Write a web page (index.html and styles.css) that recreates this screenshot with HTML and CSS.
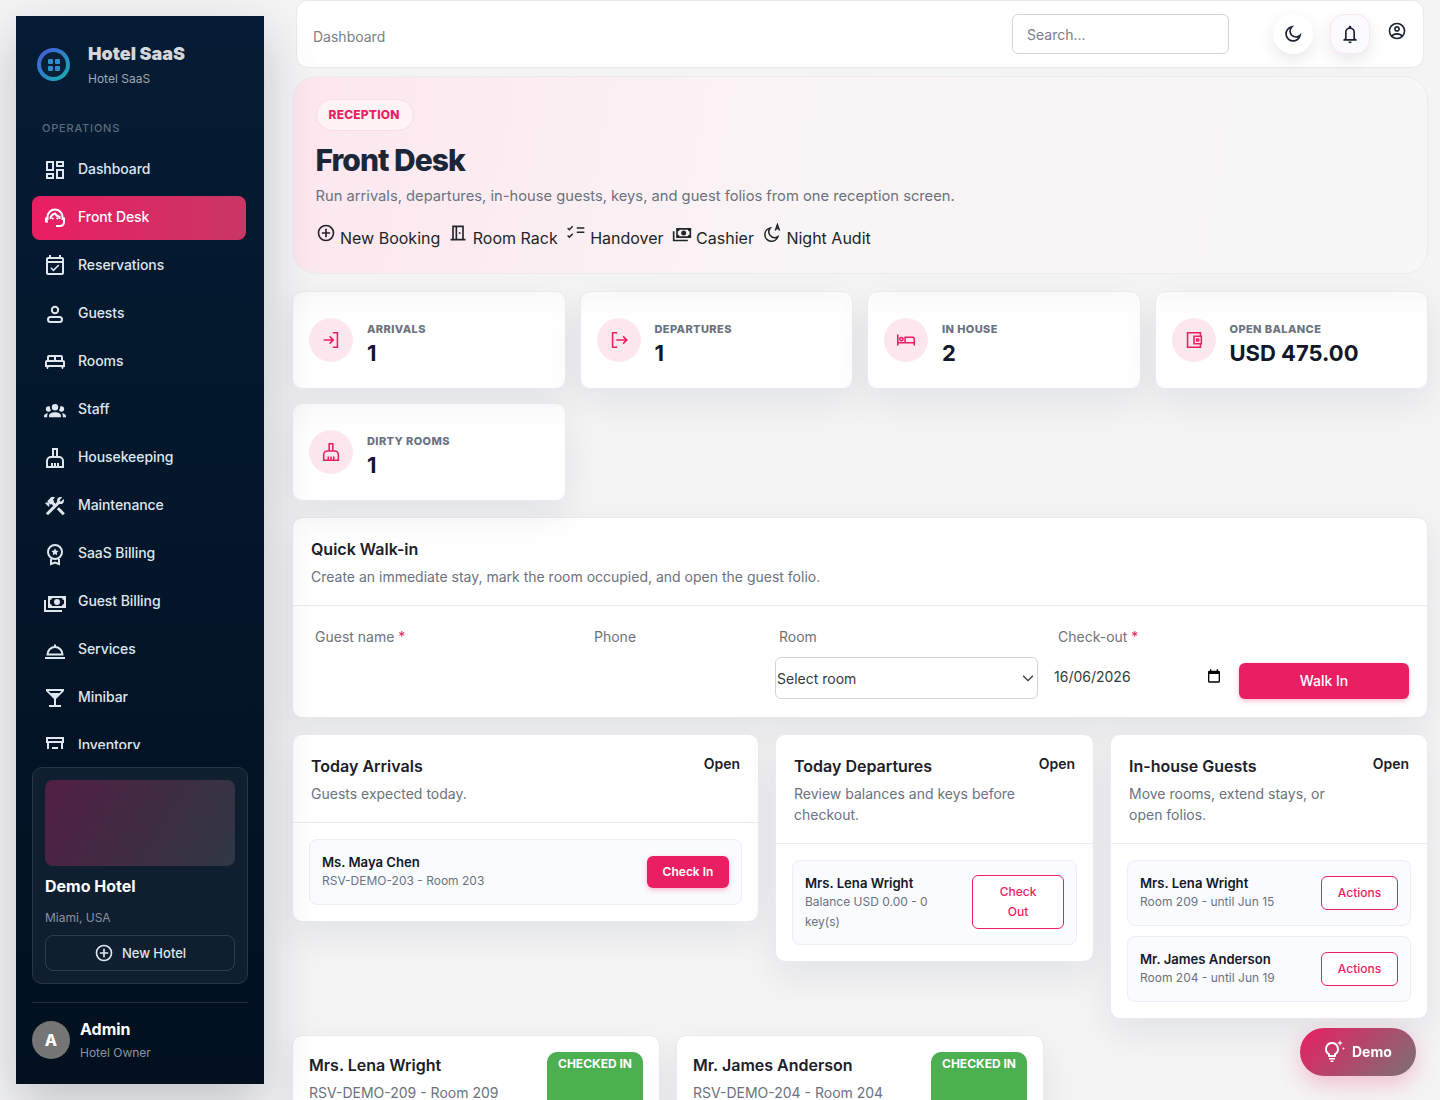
FILE: index.html
```html
<!DOCTYPE html>
<html lang="en">
  <head>
    <meta charset="UTF-8" />
    <title>Front Desk - Hotel SaaS</title>
    <link rel="stylesheet" href="styles.css">
  </head>
  <body>
    <aside class="sidebar">
      <div class="brand">
        <div class="brand-logo">
          <span class="brand-logo-inner">
            <svg viewBox="0 0 12 12" width="12" height="12"><rect x="0" y="0" width="5" height="5" rx="1"/><rect x="7" y="0" width="5" height="5" rx="1"/><rect x="0" y="7" width="5" height="5" rx="1"/><rect x="7" y="7" width="5" height="5" rx="1"/></svg>
          </span>
        </div>
        <div>
          <div class="brand-name">Hotel SaaS</div>
          <div class="brand-sub">Hotel SaaS</div>
        </div>
      </div>
      <div class="nav-title">OPERATIONS</div>
      <nav class="nav">
        <a class="nav-item"><svg class="ic" viewBox="0 0 24 24"><path d="M19,5V7H15V5H19M9,5V11H5V5H9M19,13V19H15V13H19M9,17V19H5V17H9M21,3H13V9H21V3M11,3H3V13H11V3M21,11H13V21H21V11M11,15H3V21H11V15Z"/></svg>Dashboard</a>
        <a class="nav-item active"><svg class="ic line" viewBox="0 0 24 24"><path d="M4.500 14V11a7.500 7.500 0 0 1 15 0v3"/><path d="M7.500 13c0-2.500 1.500-4.500 4.500-5.500 1 2 2.500 3 4.500 3.200V13"/><path d="M3 11.500v4h2M21 11.500V16c0 2.500-2 4-4.500 4H13"/><path class="solid" d="M9.800 11.500a1 1 0 1 1 0 2 1 1 0 0 1 0-2zM14.200 11.500a1 1 0 1 1 0 2 1 1 0 0 1 0-2z"/></svg>Front Desk</a>
        <a class="nav-item"><svg class="ic" viewBox="0 0 24 24"><path d="M19 3H18V1H16V3H8V1H6V3H5C3.89 3 3 3.9 3 5V19C3 20.1 3.89 21 5 21H19C20.1 21 21 20.1 21 19V5C21 3.9 20.1 3 19 3M19 19H5V9H19V19M19 7H5V5H19V7M10.41 17.46L16.34 11.53L15.28 10.47L10.41 15.34L8.31 13.24L7.25 14.3L10.41 17.46Z"/></svg>Reservations</a>
        <a class="nav-item"><svg class="ic line" viewBox="0 0 24 24"><circle cx="12" cy="8" r="3.2"/><rect x="5" y="15" width="14" height="5" rx="2.5"/></svg>Guests</a>
        <a class="nav-item"><svg class="ic" viewBox="0 0 24 24"><path d="M20 10V7C20 5.9 19.1 5 18 5H6C4.9 5 4 5.9 4 7V10C2.9 10 2 10.9 2 12V17H3.33L4 19H5L5.67 17H18.33L19 19H20L20.67 17H22V12C22 10.9 21.1 10 20 10M11 10H6V7H11V10M18 10H13V7H18V10M20 15H4V12H20V15Z"/></svg>Rooms</a>
        <a class="nav-item"><svg class="ic staff-ic" viewBox="0 0 24 24"><path d="M12,5.5A3.5,3.5 0 0,1 15.5,9A3.5,3.5 0 0,1 12,12.5A3.5,3.5 0 0,1 8.5,9A3.5,3.5 0 0,1 12,5.5M5,8C5.56,8 6.08,8.15 6.53,8.42C6.38,9.85 6.8,11.27 7.66,12.38C7.16,13.34 6.16,14 5,14A3,3 0 0,1 2,11A3,3 0 0,1 5,8M19,8A3,3 0 0,1 22,11A3,3 0 0,1 19,14C17.84,14 16.84,13.34 16.34,12.38C17.2,11.27 17.62,9.85 17.47,8.42C17.92,8.15 18.44,8 19,8M5.5,18.25C5.5,16.18 8.41,14.5 12,14.5C15.59,14.5 18.5,16.18 18.5,18.25V20H5.5V18.25M0,20V18.5C0,17.11 1.89,15.94 4.45,15.6C3.86,16.28 3.5,17.22 3.5,18.25V20H0M24,20H20.5V18.25C20.5,17.22 20.14,16.28 19.55,15.6C22.11,15.94 24,17.11 24,18.5V20Z"/></svg>Staff</a>
        <a class="nav-item"><svg class="ic line" viewBox="0 0 24 24"><path d="M10 3h4v8h-4zM4 21v-6a4 4 0 0 1 4-4h8a4 4 0 0 1 4 4v6zM9 17v4M12 17v4M15 17v4"/></svg>Housekeeping</a>
        <a class="nav-item"><svg class="ic" viewBox="0 0 24 24"><path d="M13.78 15.3L19.78 21.3L21.89 19.14L15.89 13.14L13.78 15.3M17.5 10.1C17.11 10.1 16.69 10.05 16.36 9.91L4.97 21.25L2.86 19.14L10.27 11.74L8.5 9.96L7.78 10.66L6.33 9.25V12.11L5.63 12.81L2.11 9.25L2.81 8.55H5.62L4.22 7.14L7.78 3.58C8.95 2.41 10.83 2.41 12 3.58L9.89 5.74L11.3 7.14L10.59 7.85L12.38 9.63L14.2 7.75C14.06 7.42 14 7 14 6.63C14 4.66 15.56 3.11 17.5 3.11C18.09 3.11 18.61 3.25 19.08 3.53L16.41 6.2L17.91 7.7L20.58 5.03C20.86 5.5 21 6 21 6.63C21 8.55 19.45 10.1 17.5 10.1Z"/></svg>Maintenance</a>
        <a class="nav-item"><svg class="ic line" viewBox="0 0 24 24"><circle cx="12" cy="10" r="7"/><path d="M8 17v5l4-1.5 4 1.500v-5"/><path class="solid" d="M12 6.3l1.1 2.3 2.5.3-1.8 1.8.4 2.5-2.2-1.2-2.2 1.2.4-2.5-1.8-1.8 2.5-.3z"/></svg>SaaS Billing</a>
        <a class="nav-item"><svg class="ic" viewBox="0 0 24 24"><path d="M5,6H23V18H5V6M14,9A3,3 0 0,1 17,12A3,3 0 0,1 14,15A3,3 0 0,1 11,12A3,3 0 0,1 14,9M9,8A2,2 0 0,1 7,10V14A2,2 0 0,1 9,16H19A2,2 0 0,1 21,14V10A2,2 0 0,1 19,8H9M1,10H3V20H19V22H1V10Z"/></svg>Guest Billing</a>
        <a class="nav-item"><svg class="ic line" viewBox="0 0 24 24"><path d="M4.500 16.500a7.500 7.500 0 0 1 15 0zM2 20h20M12 9V6.500"/></svg>Services</a>
        <a class="nav-item"><svg class="ic" viewBox="0 0 24 24"><path d="M7.5,7L5.5,5H18.5L16.5,7M11,13V19H6V21H18V19H13V13L21,5V3H3V5L11,13Z"/></svg>Minibar</a>
        <a class="nav-item"><svg class="ic line" viewBox="0 0 24 24"><path d="M4 4h16v4H4zM5 8v14M19 8v14M9 14h6"/></svg>Inventory</a>
      </nav>
      <div class="hotel-card">
        <div class="hotel-img"></div>
        <div class="hotel-name">Demo Hotel</div>
        <div class="hotel-loc">Miami, USA</div>
        <button class="hotel-btn"><svg class="ic" viewBox="0 0 24 24"><path d="M12,20C7.59,20 4,16.41 4,12C4,7.59 7.59,4 12,4C16.41,4 20,7.59 20,12C20,16.41 16.41,20 12,20M12,2A10,10 0 0,0 2,12A10,10 0 0,0 12,22A10,10 0 0,0 22,12A10,10 0 0,0 12,2M13,7H11V11H7V13H11V17H13V13H17V11H13V7Z"/></svg>New Hotel</button>
      </div>
      <div class="user-row">
        <div class="avatar">A</div>
        <div>
          <div class="user-name">Admin</div>
          <div class="user-role">Hotel Owner</div>
        </div>
      </div>
    </aside>

    <main class="main">
      <header class="topbar">
        <div class="crumb">Dashboard</div>
        <div class="search">Search...</div>
        <button class="round-btn"><svg class="ic line" viewBox="0 0 24 24"><path d="M20.500 13.500A8.500 8.500 0 1 1 10.500 3.500a7 7 0 0 0 10 10z"/></svg></button>
        <button class="round-btn bell"><svg class="ic" viewBox="0 0 24 24"><path d="M12 2a1.500 1.500 0 0 1 1.500 1.500v.6A6 6 0 0 1 18 10v7l2 1.500V20H4v-1.500L6 17v-7a6 6 0 0 1 4.500-5.900v-.6A1.500 1.500 0 0 1 12 2zm0 4a4 4 0 0 0-4 4v8h8v-8a4 4 0 0 0-4-4zM10 21h4a2 2 0 0 1-4 0z"/></svg></button>
        <svg class="ic user-ic" viewBox="0 0 24 24"><path d="M12,2A10,10 0 0,0 2,12A10,10 0 0,0 12,22A10,10 0 0,0 22,12A10,10 0 0,0 12,2M7.07,18.28C7.5,17.38 10.12,16.5 12,16.5C13.88,16.500 16.500,17.38 16.930,18.280C15.570,19.360 13.860,20 12,20C10.140,20 8.430,19.360 7.070,18.280M18.360,16.830C16.930,15.090 13.460,14.500 12,14.500C10.540,14.500 7.070,15.090 5.640,16.830C4.620,15.500 4,13.820 4,12C4,7.590 7.590,4 12,4C16.410,4 20,7.590 20,12C20,13.820 19.380,15.500 18.360,16.830M12,6C10.060,6 8.500,7.560 8.500,9.500C8.500,11.440 10.060,13 12,13C13.940,13 15.500,11.440 15.500,9.500C15.500,7.560 13.940,6 12,6M12,11A1.500,1.500 0 0,1 10.500,9.500A1.500,1.500 0 0,1 12,8A1.500,1.500 0 0,1 13.500,9.500A1.500,1.500 0 0,1 12,11Z"/></svg>
      </header>

      <section class="hero">
        <span class="pill">RECEPTION</span>
        <h1>Front Desk</h1>
        <p>Run arrivals, departures, in-house guests, keys, and guest folios from one reception screen.</p>
        <div class="hero-links">
          <a><svg class="ic" viewBox="0 0 24 24"><path d="M12,20C7.59,20 4,16.41 4,12C4,7.59 7.59,4 12,4C16.41,4 20,7.59 20,12C20,16.41 16.41,20 12,20M12,2A10,10 0 0,0 2,12A10,10 0 0,0 12,22A10,10 0 0,0 22,12A10,10 0 0,0 12,2M13,7H11V11H7V13H11V17H13V13H17V11H13V7Z"/></svg>New Booking</a>
          <a><svg class="ic" viewBox="0 0 24 24"><path d="M19 19V3H5V19H3V21H21V19H19M17 19H11V5H17V19M9 19H7V5H9V19M13 11H15V13H13V11Z"/></svg>Room Rack</a>
          <a><svg class="ic line thin" viewBox="0 0 24 24"><path d="M2 6l2 2 4-4M2 15l2 2 4-4M13 6h9M13 11h9"/></svg>Handover</a>
          <a><svg class="ic" viewBox="0 0 24 24"><path d="M5,6H23V18H5V6M14,9A3,3 0 0,1 17,12A3,3 0 0,1 14,15A3,3 0 0,1 11,12A3,3 0 0,1 14,9M9,8A2,2 0 0,1 7,10V14A2,2 0 0,1 9,16H19A2,2 0 0,1 21,14V10A2,2 0 0,1 19,8H9M1,10H3V20H19V22H1V10Z"/></svg>Cashier</a>
          <a><svg class="ic line thin" viewBox="0 0 24 24"><path d="M10 6a8 8 0 1 0 9 10.500A7 7 0 0 1 10 6zM16 9l2.500-7 2.500 7M17 6.500h3"/></svg>Night Audit</a>
        </div>
      </section>

      <section class="stats">
        <div class="stat">
          <div class="stat-ic"><svg class="ic line pink" viewBox="0 0 24 24"><path d="M14 4h5v16h-5M4 12h10M10.500 8l4 4-4 4"/></svg></div>
          <div class="stat-text"><div class="stat-label">ARRIVALS</div><div class="stat-val">1</div></div>
        </div>
        <div class="stat">
          <div class="stat-ic"><svg class="ic line pink" viewBox="0 0 24 24"><path d="M10 4H5v16h5M9 12h11M16.500 8l4 4-4 4"/></svg></div>
          <div class="stat-text"><div class="stat-label">DEPARTURES</div><div class="stat-val">1</div></div>
        </div>
        <div class="stat">
          <div class="stat-ic"><svg class="ic line pink" viewBox="0 0 24 24"><path d="M3 6v12M3 15h18v3M21 15v-4a2 2 0 0 0-2-2h-8v6"/><circle cx="7" cy="11" r="1.800"/></svg></div>
          <div class="stat-text"><div class="stat-label">IN HOUSE</div><div class="stat-val">2</div></div>
        </div>
        <div class="stat">
          <div class="stat-ic"><svg class="ic line pink" viewBox="0 0 24 24"><path d="M19 8V4H5v16h14v-4"/><path d="M12 8h8v8h-8z"/><rect x="15" y="11" width="2" height="2"/></svg></div>
          <div class="stat-text"><div class="stat-label">OPEN BALANCE</div><div class="stat-val">USD 475.00</div></div>
        </div>
        <div class="stat">
          <div class="stat-ic"><svg class="ic line pink" viewBox="0 0 24 24"><path d="M10 3h4v8h-4zM4 21v-6a4 4 0 0 1 4-4h8a4 4 0 0 1 4 4v6zM9 17v4M12 17v4M15 17v4"/></svg></div>
          <div class="stat-text"><div class="stat-label">DIRTY ROOMS</div><div class="stat-val">1</div></div>
        </div>
      </section>

      <section class="card walkin">
        <div class="card-head">
          <div class="card-title">Quick Walk-in</div>
          <div class="card-sub">Create an immediate stay, mark the room occupied, and open the guest folio.</div>
        </div>
        <form class="walkin-form">
          <div class="field">
            <label>Guest name <span class="req">*</span></label>
          </div>
          <div class="field">
            <label>Phone</label>
          </div>
          <div class="field">
            <label>Room</label>
            <select class="room-select"><option>Select room</option></select>
          </div>
          <div class="field">
            <label>Check-out <span class="req">*</span></label>
            <div class="date-val">16/06/2026
              <svg viewBox="0 0 24 24" width="16" height="16"><path d="M19 4h-1V2h-2v2H8V2H6v2H5a2 2 0 0 0-2 2v14a2 2 0 0 0 2 2h14a2 2 0 0 0 2-2V6a2 2 0 0 0-2-2zm0 16H5V9h14z"/></svg>
            </div>
          </div>
          <button type="button" class="btn-pink walk-btn">Walk In</button>
        </form>
      </section>

      <section class="board">
        <div class="card">
          <div class="card-head split">
            <div>
              <div class="card-title">Today Arrivals</div>
              <div class="card-sub">Guests expected today.</div>
            </div>
            <a class="open-link">Open</a>
          </div>
          <div class="list">
            <div class="item">
              <div class="item-text">
                <div class="item-name">Ms. Maya Chen</div>
                <div class="item-sub">RSV-DEMO-203 - Room 203</div>
              </div>
              <button class="btn-pink small">Check In</button>
            </div>
          </div>
        </div>

        <div class="card">
          <div class="card-head split">
            <div>
              <div class="card-title">Today Departures</div>
              <div class="card-sub">Review balances and keys before checkout.</div>
            </div>
            <a class="open-link">Open</a>
          </div>
          <div class="list">
            <div class="item tall">
              <div class="item-text">
                <div class="item-name">Mrs. Lena Wright</div>
                <div class="item-sub">Balance USD 0.00 - 0 key(s)</div>
              </div>
              <button class="btn-line checkout">Check Out</button>
            </div>
          </div>
        </div>

        <div class="card">
          <div class="card-head split">
            <div>
              <div class="card-title">In-house Guests</div>
              <div class="card-sub">Move rooms, extend stays, or open folios.</div>
            </div>
            <a class="open-link">Open</a>
          </div>
          <div class="list">
            <div class="item">
              <div class="item-text">
                <div class="item-name">Mrs. Lena Wright</div>
                <div class="item-sub">Room 209 - until Jun 15</div>
              </div>
              <button class="btn-line">Actions</button>
            </div>
            <div class="item">
              <div class="item-text">
                <div class="item-name">Mr. James Anderson</div>
                <div class="item-sub">Room 204 - until Jun 19</div>
              </div>
              <button class="btn-line">Actions</button>
            </div>
          </div>
        </div>
      </section>

      <section class="stays">
        <div class="card stay">
          <div class="stay-text">
            <div class="card-title">Mrs. Lena Wright</div>
            <div class="card-sub">RSV-DEMO-209 - Room 209</div>
          </div>
          <span class="badge">CHECKED IN</span>
        </div>
        <div class="card stay">
          <div class="stay-text">
            <div class="card-title">Mr. James Anderson</div>
            <div class="card-sub">RSV-DEMO-204 - Room 204</div>
          </div>
          <span class="badge">CHECKED IN</span>
        </div>
      </section>
    </main>

    <button class="demo-btn">
      <svg class="ic" viewBox="0 0 24 24"><path d="M10 3a7 7 0 0 0-4 12.700V17a1 1 0 0 0 1 1h6a1 1 0 0 0 1-1v-1.300A7 7 0 0 0 10 3zm0 2a5 5 0 0 1 3 9l-1 .7V16H8v-1.300L7 14a5 5 0 0 1 3-9zM7 19h6v1.500H7zM8.500 21.500h3V23h-3zM18 1l.7 2.300L21 4l-2.300.7L18 7l-.7-2.300L15 4l2.300-.7zM21.500 8l.4 1.100 1.100.4-1.100.4-.4 1.100-.4-1.100-1.100-.4 1.100-.4z"/></svg>
      Demo
    </button>
  </body>
</html>
```

FILE: styles.css
```css
* {
  box-sizing: border-box;
}

html,
body {
  height: 1100px;
  overflow: hidden;
}

body {
  margin: 0;
  display: flex;
  align-items: flex-start;
  background: #f4f4f5;
  color: #212529;
  font-family: Inter, "Liberation Sans", sans-serif;
  font-size: 14px;
}

a {
  color: inherit;
  text-decoration: none;
}

button {
  font-family: inherit;
  cursor: pointer;
}

.ic {
  width: 24px;
  height: 24px;
  fill: currentColor;
  flex-shrink: 0;
}

.ic.line {
  fill: none;
  stroke: currentColor;
  stroke-width: 2;
}

.ic.line.thin {
  stroke-width: 1.8;
}

.ic .solid {
  fill: currentColor;
  stroke: none;
}

/* sidebar */
.sidebar {
  position: relative;
  z-index: 2;
  width: 248px;
  height: 1068px;
  margin: 16px 0 0 16px;
  padding: 0 16px;
  display: flex;
  flex-direction: column;
  flex-shrink: 0;
  color: #dfe6ee;
  background: linear-gradient(180deg, #051c34 0%, #02101f 100%);
  box-shadow: 0 20px 50px rgba(15, 23, 42, 0.22);
}

.brand {
  display: flex;
  align-items: center;
  gap: 18px;
  padding: 26px 0 0 5px;
}

.brand-logo {
  width: 33px;
  height: 33px;
  padding: 4px;
  border-radius: 50%;
  background: linear-gradient(135deg, #4a55e0, #12b5ad);
}

.brand-logo-inner {
  width: 100%;
  height: 100%;
  display: flex;
  align-items: center;
  justify-content: center;
  border-radius: 50%;
  background: #0a2037;
}

.brand-logo-inner svg {
  fill: #2f8ecb;
}

.brand-name {
  color: #d4d6d9;
  font-size: 18px;
  font-weight: 900;
  line-height: 24px;
}

.brand-sub {
  margin-top: 5px;
  color: #a1a8b1;
  font-size: 12px;
  line-height: 16px;
}

.nav-title {
  margin: 34px 0 0 10px;
  color: #5a6b7e;
  font-size: 11px;
  font-weight: 500;
  letter-spacing: 0.8px;
  line-height: 14px;
}

.nav {
  height: 601px;
  margin-top: 13px;
  display: flex;
  flex-direction: column;
  gap: 4px;
  overflow: hidden;
  flex-shrink: 0;
}

.nav-item {
  width: 214px;
  height: 44px;
  padding: 0 0 4px 11px;
  display: flex;
  align-items: center;
  gap: 11px;
  flex-shrink: 0;
  border-radius: 8px;
  font-size: 14px;
  font-weight: 500;
  letter-spacing: -0.08px;
}

.nav-item .ic {
  margin-top: 4px;
}

.nav-item .staff-ic {
  width: 22px;
  height: 22px;
  margin: 4px 1px 0;
}

.nav-item.active {
  color: #fff;
  background: linear-gradient(90deg, #e91e63, #c93766);
}

.hotel-card {
  height: 217px;
  margin-top: 18px;
  padding: 12px;
  flex-shrink: 0;
  background: #101f2f;
  border: 1px solid #293745;
  border-radius: 10px;
}

.hotel-img {
  height: 86px;
  border-radius: 8px;
  background: linear-gradient(120deg, #521f42, #2f3844);
}

.hotel-name {
  margin-top: 9px;
  color: #fff;
  font-size: 16px;
  font-weight: 700;
  line-height: 22px;
}

.hotel-loc {
  margin-top: 13px;
  color: #8a94a0;
  font-size: 12px;
  line-height: 16px;
}

.hotel-btn {
  width: 100%;
  height: 36px;
  margin-top: 9px;
  display: flex;
  align-items: center;
  justify-content: center;
  gap: 8px;
  color: #dfe6ee;
  background: transparent;
  border: 1px solid #2f3d4c;
  border-radius: 8px;
  font-size: 13px;
  font-weight: 500;
}

.hotel-btn .ic {
  width: 20px;
  height: 20px;
}

.user-row {
  margin-top: 18px;
  padding-top: 16px;
  display: flex;
  align-items: center;
  gap: 10px;
  border-top: 1px solid #1c2a39;
}

.avatar {
  width: 38px;
  height: 38px;
  display: flex;
  align-items: center;
  justify-content: center;
  color: #fff;
  background: #757575;
  border-radius: 50%;
  font-size: 16px;
  font-weight: 800;
}

.user-name {
  color: #fff;
  font-size: 16px;
  font-weight: 700;
  line-height: 20px;
}

.user-role {
  margin-top: 6px;
  color: #8a94a0;
  font-size: 12px;
  line-height: 16px;
}

/* main */
.main {
  width: 1136px;
  margin-left: 28px;
  flex-shrink: 0;
}

.topbar {
  height: 68px;
  margin: 0 4px;
  padding: 0 16px;
  display: flex;
  align-items: flex-start;
  background: #fff;
  border: 1px solid #e8e8ee;
  border-radius: 12px;
}

.crumb {
  margin-top: 27px;
  color: #7b7f86;
  font-size: 14px;
  line-height: 18px;
}

.search {
  width: 217px;
  height: 40px;
  margin: 13px 0 0 auto;
  padding-left: 14px;
  display: flex;
  align-items: center;
  color: #7d7d84;
  background: #fff;
  border: 1px solid #d4d4dc;
  border-radius: 6px;
  font-size: 14px;
}

.round-btn {
  width: 40px;
  height: 40px;
  margin: 13px 0 0 44px;
  padding: 0;
  display: flex;
  align-items: center;
  justify-content: center;
  color: #1b2333;
  background: #fff;
  border: 0;
  border-radius: 50%;
  box-shadow: 0 6px 16px rgba(20, 30, 50, 0.1);
}

.round-btn.bell {
  margin-left: 17px;
  background: #fbfbff;
  border: 1px solid #fbe6ec;
  border-radius: 14px;
}

.round-btn .ic {
  width: 20px;
  height: 20px;
}

.user-ic {
  width: 20px;
  height: 20px;
  margin: 20px 0 0 17px;
  color: #1b2333;
}

.hero {
  height: 198px;
  margin-top: 8px;
  padding: 22px 22.5px;
  background: linear-gradient(100deg, #fde7ee 0%, #f9f4f6 45%, #f7f7f8 100%);
  border: 1px solid #ececf0;
  border-radius: 24px;
}

.pill {
  display: inline-block;
  height: 32px;
  padding: 0 13px 0 12px;
  color: #e91e63;
  background: #fff3f6;
  border: 1px solid #fbdbe5;
  border-radius: 16px;
  font-size: 12px;
  font-weight: 800;
  letter-spacing: 0.2px;
  line-height: 29px;
}

.hero h1 {
  margin: 10px 0 0;
  color: #1b2638;
  font-size: 30px;
  font-weight: 800;
  letter-spacing: -1px;
  line-height: 38px;
}

.hero p {
  margin: 6px 0 0;
  color: #6b7280;
  font-size: 14.72px;
  line-height: 22px;
}

.hero-links {
  margin-top: 19px;
  display: flex;
  gap: 8px;
}

.hero-links a {
  display: flex;
  align-items: flex-start;
  gap: 4.5px;
  color: #212529;
  font-size: 16px;
  line-height: 24px;
}

.hero-links .ic {
  width: 20px;
  height: 20px;
  margin-top: -3px;
}

.stats {
  margin-top: 17px;
  display: grid;
  grid-template-columns: repeat(4, 1fr);
  gap: 14px;
}

.stat {
  height: 98px;
  padding: 0 16px;
  display: flex;
  align-items: center;
  gap: 14px;
  background: linear-gradient(180deg, #f9f9fa, #fff 30%);
  border: 1px solid #e9e9ef;
  border-radius: 10px;
  box-shadow: 0 14px 36px rgba(15, 23, 42, 0.08);
}

.stat-ic {
  width: 44px;
  height: 44px;
  display: flex;
  align-items: center;
  justify-content: center;
  background: #fde7ee;
  border-radius: 50%;
}

.ic.pink {
  width: 22px;
  height: 22px;
  color: #e91e63;
  stroke-width: 1.7;
}

.stat-text {
  padding-top: 10px;
}

.stat-label {
  color: #6b7280;
  font-size: 11px;
  font-weight: 800;
  letter-spacing: 0.4px;
  line-height: 14px;
}

.stat-val {
  margin-top: 2px;
  color: #111827;
  font-size: 22px;
  font-weight: 700;
  line-height: 30px;
}

.card {
  background: #fff;
  border: 1px solid #e9e9ef;
  border-radius: 10px;
  box-shadow: 0 14px 36px rgba(15, 23, 42, 0.08);
}

.card-head {
  padding: 17px 18px 18px;
  border-bottom: 1px solid #ececf1;
}

.card-head.split {
  display: flex;
  justify-content: space-between;
  gap: 12px;
}

.card-title {
  color: #1b2029;
  font-size: 16px;
  font-weight: 600;
  line-height: 28px;
}

.card-sub {
  margin-top: 3px;
  color: #6b7280;
  font-size: 14px;
  line-height: 21px;
}

.walkin {
  height: 201px;
  margin-top: 16px;
}

.walkin-form {
  padding: 21px 18px 0;
  display: grid;
  grid-template-columns: 263px 169px 263px 169px 170px;
  gap: 16px;
  align-items: start;
}

.field label {
  display: block;
  padding-left: 4px;
  color: #6f7379;
  font-size: 14px;
  line-height: 20px;
}

.req {
  color: #e91e63;
}

.room-select {
  width: 100%;
  height: 42px;
  margin-top: 10px;
  padding: 0 0 0 1px;
  color: #343a40;
  appearance: none;
  background: #fff url("data:image/svg+xml,%3Csvg xmlns='http://www.w3.org/2000/svg' viewBox='0 0 16 16'%3E%3Cpath fill='none' stroke='%23343a40' stroke-width='1.6' d='M2.500 5.500L8 11l5.500-5.500'/%3E%3C/svg%3E") no-repeat right 2px center / 14px 14px;
  border: 1px solid #d4d4dc;
  border-radius: 6px;
  font-family: inherit;
  font-size: 14px;
}

.date-val {
  height: 20px;
  margin-top: 19px;
  display: flex;
  align-items: center;
  justify-content: space-between;
  color: #343a40;
  font-size: 14px;
  padding-right: 1px;
}

.btn-pink {
  padding: 0 0 2px;
  color: #fff;
  background: #e91e63;
  border: 0;
  border-radius: 6px;
  font-size: 14px;
  font-weight: 500;
  box-shadow: 0 2px 5px rgba(233, 30, 99, 0.3);
}

.walk-btn {
  height: 36px;
  margin-top: 36px;
}

.btn-pink.small {
  width: 82px;
  height: 32px;
  font-size: 12px;
  font-weight: 600;
}

.btn-line {
  width: 77px;
  height: 34px;
  padding: 0 0 2px;
  color: #e91e63;
  background: #fff;
  border: 1px solid #e91e63;
  border-radius: 6px;
  font-size: 12px;
  font-weight: 500;
  flex-shrink: 0;
}

.btn-line.checkout {
  width: 92px;
  height: 54px;
  margin-top: -2px;
  line-height: 20px;
  padding: 0 20px;
}

.board {
  margin-top: 16px;
  display: grid;
  grid-template-columns: 467px 319px 318px;
  gap: 16px;
  align-items: start;
}

.open-link {
  color: #1b2029;
  font-size: 14px;
  font-weight: 600;
  line-height: 24px;
  flex-shrink: 0;
}

.list {
  padding: 16px;
  display: flex;
  flex-direction: column;
  gap: 10px;
}

.item {
  padding: 13px 12px;
  display: flex;
  align-items: center;
  justify-content: space-between;
  gap: 12px;
  background: #fafbfe;
  border: 1px solid #eceef4;
  border-radius: 8px;
}

.item.tall {
  padding-bottom: 12px;
}

.item-name {
  color: #111827;
  font-size: 13.12px;
  font-weight: 600;
  line-height: 18px;
}

.item-sub {
  color: #6b7280;
  font-size: 12px;
  line-height: 20px;
}

.stays {
  margin-top: 16px;
  display: flex;
  gap: 16px;
}

.stay {
  width: 368px;
  height: 120px;
  padding: 16px;
  display: flex;
  justify-content: space-between;
  align-items: flex-start;
}

.stay-text {
  margin-top: -1px;
}

.badge {
  width: 96px;
  height: 66px;
  padding-top: 4px;
  color: #fff;
  background: #4caf50;
  border-radius: 10px;
  font-size: 12px;
  font-weight: 700;
  line-height: 16px;
  text-align: center;
}

.demo-btn {
  position: fixed;
  left: 1300px;
  top: 1028px;
  width: 116px;
  height: 48px;
  padding: 0 0 2px 22px;
  display: flex;
  align-items: center;
  gap: 6px;
  color: #fff;
  background: linear-gradient(135deg, #e91e63, #7a7276);
  border: 0;
  border-radius: 24px;
  font-size: 14px;
  font-weight: 700;
  box-shadow: 0 8px 22px rgba(233, 30, 99, 0.25);
}
```
